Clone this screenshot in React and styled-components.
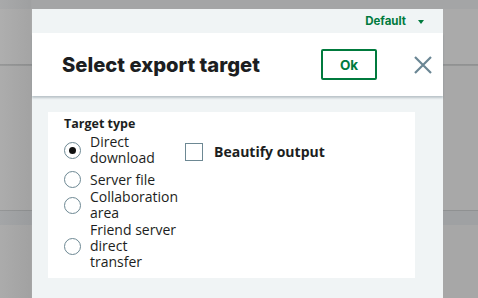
import styled, { createGlobalStyle } from "styled-components";

const Global = createGlobalStyle`
  html, body { margin: 0; padding: 0; }
  body { font-family: "Open Sans", "Liberation Sans", sans-serif; }
`;

const Backdrop = styled.div`
  width: 478px;
  height: 298px;
  overflow: hidden;
  display: flex;
  align-items: flex-start;
  padding-left: 32px;
  box-sizing: border-box;
  background:
    linear-gradient(to right, rgba(255,255,255,0.05), rgba(0,0,0,0.03) 30px, rgba(255,255,255,0) 32px),
    linear-gradient(
      to bottom,
      #a4a5a6 0px, #a4a5a6 9px,
      #aaaaaa 9px, #aaaaaa 64px,
      #8e8f90 64px, #979898 66px,
      #a8a8a8 66px, #a8a8a8 210px,
      #8f9192 210px, #8f9192 211px,
      #9fa1a3 211px, #9fa1a3 225px,
      #a7a7a7 225px
    );
`;

const Modal = styled.div`
  margin-top: 9px;
  width: 411px;
  height: 289px;
  display: flex;
  flex-direction: column;
  background: #f0f4f5;
`;

const TopBar = styled.div`
  height: 24px;
  display: flex;
  align-items: center;
  justify-content: flex-end;
  gap: 12px;
  padding-right: 19px;
  background: #f0f4f5;
`;

const ProfileName = styled.span`
  font-family: Inter, "Liberation Sans", sans-serif;
  font-weight: 700;
  font-size: 11.5px;
  color: #007a3d;
`;

const Caret = styled.span`
  width: 0;
  height: 0;
  border-left: 3px solid transparent;
  border-right: 3px solid transparent;
  border-top: 4px solid #007a3d;
  margin-top: 1px;
`;

const Header = styled.div`
  height: 63px;
  display: flex;
  align-items: center;
  padding-left: 30px;
  padding-right: 10px;
  background: #ffffff;
  box-shadow: 0 2px 2px rgba(90, 110, 120, 0.35);
  position: relative;
  z-index: 1;
`;

const Title = styled.h1`
  margin: 0;
  flex: 1;
  font-family: Inter, "Liberation Sans", sans-serif;
  font-weight: 800;
  font-size: 20.2px;
  color: #1c1e21;
`;

const OkButton = styled.button`
  width: 56px;
  height: 31px;
  border: 2px solid #007a3d;
  border-radius: 2px;
  background: #fff;
  color: #007a3d;
  font-family: Inter, "Liberation Sans", sans-serif;
  font-weight: 700;
  font-size: 13.5px;
  padding: 0;
  margin-right: 36px;
`;

const CloseButton = styled.button`
  width: 20px;
  height: 20px;
  border: 0;
  background: none;
  padding: 0;
  display: flex;
`;

const Body = styled.div`
  flex: 1;
  padding: 16px 28px 0 16px;
`;

const Panel = styled.div`
  height: 166px;
  background: #ffffff;
  padding: 3px 16px 0;
  box-sizing: border-box;
  display: flex;
  gap: 7px;
`;

const Column = styled.div`
  display: flex;
  flex-direction: column;
`;

const GroupLabel = styled.div`
  font-weight: 700;
  font-size: 12.5px;
  color: #1c1e21;
  line-height: 17px;
  margin-bottom: 2px;
`;

const Option = styled.label`
  display: flex;
  align-items: center;
  gap: 9px;
  font-size: 14px;
  line-height: 16px;
  color: #1c1e21;
  margin-bottom: ${(p) => (p.$gap ? p.$gap : 0)}px;
`;

const Radio = styled.span`
  flex: none;
  width: 17px;
  height: 17px;
  border: 1px solid #6d8893;
  border-radius: 50%;
  box-sizing: border-box;
  display: flex;
  align-items: center;
  justify-content: center;
  &::after {
    content: "";
    width: 7px;
    height: 7px;
    border-radius: 50%;
    background: ${(p) => (p.$checked ? "#111" : "transparent")};
  }
`;

const OptionText = styled.span`
  width: 88px;
`;

const CheckRow = styled.label`
  display: flex;
  align-items: center;
  gap: 11px;
  margin-top: 27px;
  font-weight: 700;
  font-size: 14px;
  color: #1c1e21;
`;

const Box = styled.span`
  width: 18px;
  height: 18px;
  border: 1px solid #6d8893;
  box-sizing: border-box;
`;

const options = [
  { id: "download", label: "Direct download", checked: true, gap: 5 },
  { id: "server", label: "Server file", gap: 1 },
  { id: "collab", label: "Collaboration area", gap: 1 },
  { id: "friend", label: "Friend server direct transfer" },
];

export default function App() {
  return (
    <>
      <Global />
      <Backdrop>
        <Modal>
          <TopBar>
            <ProfileName>Default</ProfileName>
            <Caret />
          </TopBar>
          <Header>
            <Title>Select export target</Title>
            <OkButton>Ok</OkButton>
            <CloseButton aria-label="Close">
              <svg width="20" height="20" viewBox="0 0 20 20">
                <path d="M2 2 L18 18 M18 2 L2 18" stroke="#6a8694" strokeWidth="2.2" fill="none" />
              </svg>
            </CloseButton>
          </Header>
          <Body>
            <Panel>
              <Column>
                <GroupLabel>Target type</GroupLabel>
                {options.map((o) => (
                  <Option key={o.id} $gap={o.gap}>
                    <Radio $checked={o.checked} />
                    <OptionText>{o.label}</OptionText>
                  </Option>
                ))}
              </Column>
              <Column>
                <CheckRow>
                  <Box />
                  Beautify output
                </CheckRow>
              </Column>
            </Panel>
          </Body>
        </Modal>
      </Backdrop>
    </>
  );
}
